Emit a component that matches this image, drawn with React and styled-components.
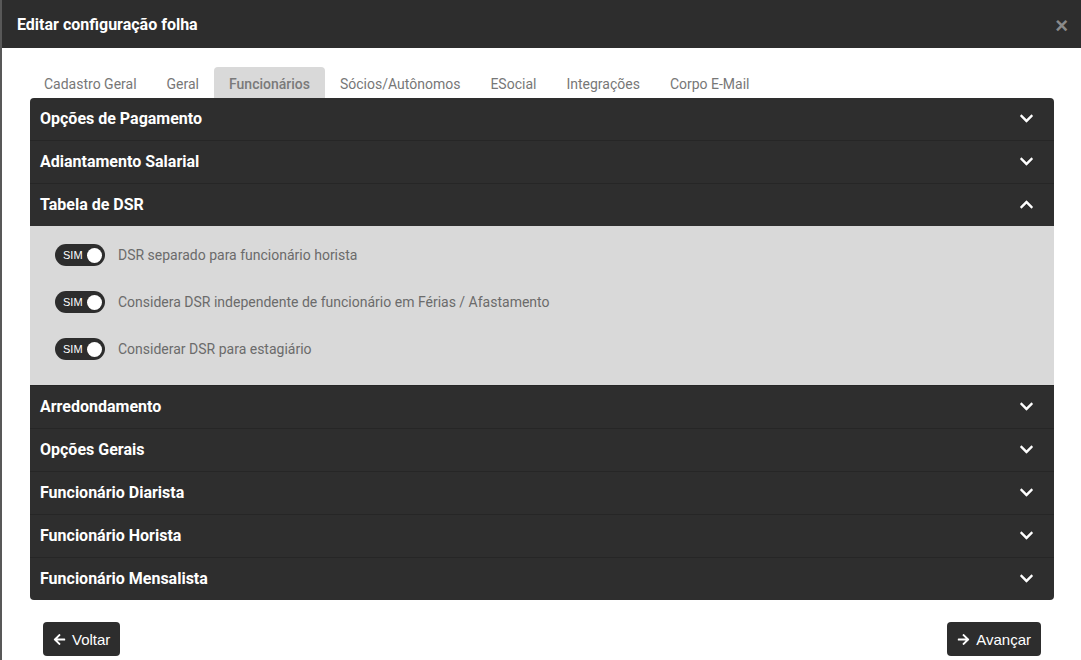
import React, { useState } from 'react';
import styled, { createGlobalStyle } from 'styled-components';
import { FaChevronDown, FaChevronUp, FaArrowLeft, FaArrowRight } from 'react-icons/fa';

const GlobalStyle = createGlobalStyle`
    html, body {
        margin: 0;
        padding: 0;
        background: #5a5a5a;
        font-family: Roboto, "Liberation Sans", sans-serif;
    }
    * { box-sizing: border-box; }
`;

const Backdrop = styled.div`
    width: 1081px;
    height: 660px;
    overflow: hidden;
    background: #585858;
    padding-left: 2px;
`;

const Modal = styled.div`
    width: 1090px;
    height: 100%;
    background: #fff;
    display: flex;
    flex-direction: column;
`;

const ModalHeader = styled.div`
    height: 48px;
    flex-shrink: 0;
    background: #2d2d2d;
    display: flex;
    align-items: center;
    padding: 0 15px;
    width: 1079px;
    justify-content: space-between;
`;

const Title = styled.h4`
    margin: 0;
    color: #fff;
    font-size: 16px;
    font-weight: 700;
`;

const Close = styled.span`
    color: #8a8a8a;
    font-family: "Liberation Sans", sans-serif;
    font-size: 22px;
    font-weight: 700;
    line-height: 1;
    margin-top: 4px;
    margin-right: -2px;
`;

const Body = styled.div`
    padding: 19px 25px 0 26px;
    width: 1079px;
`;

const Tabs = styled.ul`
    list-style: none;
    margin: 0;
    padding: 0 0 0 1px;
    display: flex;
    height: 31px;
`;

const Tab = styled.li`
    padding: 3px 15px 0;
    font-size: 14px;
    color: ${props => props.active ? '#7a7a7a' : '#777'};
    font-weight: ${props => props.active ? 500 : 400};
    background: ${props => props.active ? '#d9d9d9' : 'transparent'};
    border-radius: 4px 4px 0 0;
    display: flex;
    align-items: center;
`;

const Accordion = styled.div`
    width: 1024px;
    margin-left: 2px;
    border-radius: 4px;
    overflow: hidden;
    background: #2e2e2e;
`;

const Panel = styled.div`
    & + & { border-top: 1px solid #262626; }
`;

const PanelHeader = styled.div`
    height: 42px;
    display: flex;
    align-items: center;
    justify-content: space-between;
    padding: 0 20px 2px 10px;
    color: #fff;
    font-size: 16px;
    font-weight: 700;
    cursor: pointer;
`;

const PanelBody = styled.div`
    background: #d9d9d9;
    padding: 18px 25px 25px 25px;
    display: flex;
    flex-direction: column;
    gap: 25px;
`;

const OptionRow = styled.label`
    display: flex;
    align-items: center;
    gap: 13px;
    font-size: 14px;
    color: #6b6b6b;
    height: 22px;
`;

const Switch = styled.span`
    width: 50px;
    height: 22px;
    border-radius: 11px;
    background: #2d2d2d;
    display: flex;
    align-items: center;
    justify-content: space-between;
    padding: 0 3px 0 8px;
    color: #fff;
    font-family: "Liberation Sans", Arial, sans-serif;
    font-size: 11px;
`;

const Knob = styled.span`
    width: 15px;
    height: 15px;
    border-radius: 50%;
    background: #fff;
`;

const Footer = styled.div`
    display: flex;
    justify-content: space-between;
    padding: 22px 13px 0 15px;
    width: 1026px;
`;

const Button = styled.button`
    height: 34px;
    border: none;
    border-radius: 4px;
    background: #2d2d2d;
    color: #fff;
    font-family: "Liberation Sans", Arial, sans-serif;
    font-size: 15px;
    display: flex;
    align-items: center;
    gap: 6px;
    padding: 0 10px;
    svg { font-size: 13px; }
`;

const tabs = ['Cadastro Geral', 'Geral', 'Funcionários', 'Sócios/Autônomos', 'ESocial', 'Integrações', 'Corpo E-Mail'];

const panels = [
    'Opções de Pagamento',
    'Adiantamento Salarial',
    'Tabela de DSR',
    'Arredondamento',
    'Opções Gerais',
    'Funcionário Diarista',
    'Funcionário Horista',
    'Funcionário Mensalista'
];

const dsrOptions = [
    'DSR separado para funcionário horista',
    'Considera DSR independente de funcionário em Férias / Afastamento',
    'Considerar DSR para estagiário'
];

const App = () => {
    const [open, setOpen] = useState('Tabela de DSR');

    return (
        <Backdrop>
            <GlobalStyle />
            <Modal>
                <ModalHeader>
                    <Title>Editar configuração folha</Title>
                    <Close>×</Close>
                </ModalHeader>
                <Body>
                    <Tabs>
                        {tabs.map(tab => <Tab key={tab} active={tab === 'Funcionários'}>{tab}</Tab>)}
                    </Tabs>
                    <Accordion>
                        {panels.map(panel => {
                            const isOpen = panel === open;
                            return (
                                <Panel key={panel}>
                                    <PanelHeader onClick={() => setOpen(isOpen ? null : panel)}>
                                        {panel}
                                        {isOpen ? <FaChevronUp size={15} /> : <FaChevronDown size={15} />}
                                    </PanelHeader>
                                    {isOpen && <PanelBody>
                                        {dsrOptions.map(opt => (
                                            <OptionRow key={opt}>
                                                <Switch>SIM<Knob /></Switch>
                                                {opt}
                                            </OptionRow>
                                        ))}
                                    </PanelBody>}
                                </Panel>
                            );
                        })}
                    </Accordion>
                    <Footer>
                        <Button><FaArrowLeft /> Voltar</Button>
                        <Button><FaArrowRight /> Avançar</Button>
                    </Footer>
                </Body>
            </Modal>
        </Backdrop>
    );
};

export default App;
